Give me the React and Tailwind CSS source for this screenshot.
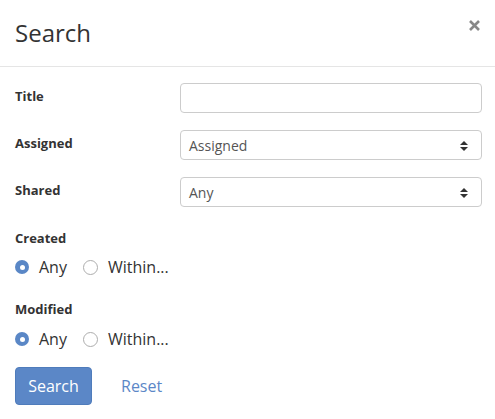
import { useState } from "react";

function SelectBox({ value }) {
  return (
    <div className="relative flex h-[30px] w-[302px] shrink-0 items-center rounded-[4px] border border-[#ccc] bg-white pl-[8px] text-[14px] text-[#555]">
      {value}
      <svg
        className="absolute right-[13px] top-[10px]"
        width="8"
        height="10"
        viewBox="0 0 8 10"
      >
        <path d="M0 4 L4 0 L8 4 Z" fill="#333" />
        <path d="M0 6 L4 10 L8 6 Z" fill="#333" />
      </svg>
    </div>
  );
}

function Radio({ checked, label, onClick }) {
  return (
    <label className="flex cursor-pointer items-center" onClick={onClick}>
      {checked ? (
        <span className="flex h-[14px] w-[14px] items-center justify-center rounded-full bg-[#5a87c6]">
          <span className="h-[5px] w-[5px] rounded-full bg-white" />
        </span>
      ) : (
        <span className="h-[15px] w-[15px] rounded-full border border-[#adadad] bg-white" />
      )}
      <span className="ml-[10px] text-[16px] text-[#333]">{label}</span>
    </label>
  );
}

export default function App() {
  const [created, setCreated] = useState("any");
  const [modified, setModified] = useState("any");

  return (
    <div
      className="h-[419px] w-[495px] bg-white text-[#333]"
      style={{ fontFamily: '"Open Sans", sans-serif' }}
    >
      {/* header */}
      <div className="flex h-[67px] items-center justify-between border-b border-[#e5e5e5] px-[15px]">
        <h1 className="mt-[-1px] text-[24px] font-normal text-[#333]">Search</h1>
        <button className="mb-[16px] text-[#888]">
          <svg width="11" height="11" viewBox="0 0 11 11">
            <path d="M1 1 L10 10 M10 1 L1 10" stroke="#888" strokeWidth="2.6" />
          </svg>
        </button>
      </div>

      {/* body */}
      <div className="pl-[15px] pr-[13px] pt-[16px]">
        <div className="mb-[17px] flex h-[30px] items-center">
          <div className="mb-[2px] w-[165px] shrink-0 text-[13px] font-bold">Title</div>
          <input className="h-[30px] w-[302px] shrink-0 rounded-[4px] border border-[#ccc] px-[8px] text-[14px] outline-none" />
        </div>
        <div className="mb-[17px] flex h-[30px] items-center">
          <div className="mb-[2px] w-[165px] shrink-0 text-[13px] font-bold">Assigned</div>
          <SelectBox value="Assigned" />
        </div>
        <div className="flex h-[30px] items-center">
          <div className="mb-[2px] w-[165px] shrink-0 text-[13px] font-bold">Shared</div>
          <SelectBox value="Any" />
        </div>

        <div className="mt-[22px] h-[18px] text-[13px] font-bold leading-[18px]">
          Created
        </div>
        <div className="mt-[10px] flex h-[20px] items-center gap-[16px]">
          <Radio
            checked={created === "any"}
            label="Any"
            onClick={() => setCreated("any")}
          />
          <Radio
            checked={created === "within"}
            label="Within..."
            onClick={() => setCreated("within")}
          />
        </div>

        <div className="mt-[23px] h-[18px] text-[13px] font-bold leading-[18px]">
          Modified
        </div>
        <div className="mt-[11px] flex h-[20px] items-center gap-[16px]">
          <Radio
            checked={modified === "any"}
            label="Any"
            onClick={() => setModified("any")}
          />
          <Radio
            checked={modified === "within"}
            label="Within..."
            onClick={() => setModified("within")}
          />
        </div>

        <div className="mt-[18px] flex items-center">
          <button className="h-[38px] w-[77px] rounded-[4px] border border-[#4f7cbb] bg-[#5b87c7] text-[16px] text-white">
            Search
          </button>
          <button className="ml-[29px] text-[16px] text-[#5b87c7]">Reset</button>
        </div>
      </div>
    </div>
  );
}
